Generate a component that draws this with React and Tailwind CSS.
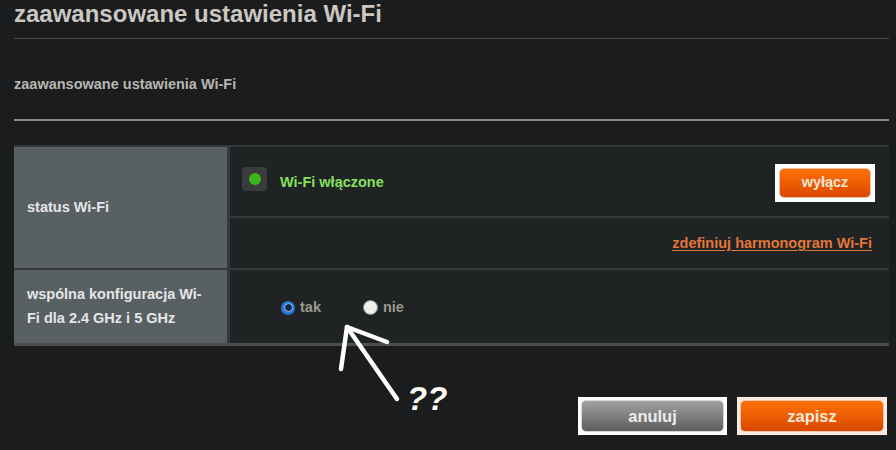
export default function App() {
  const font = { fontFamily: '"Liberation Sans", Arial, sans-serif' }

  return (
    <div className="relative w-[896px] h-[450px] overflow-hidden bg-[#1b1c1e] font-bold" style={font}>
      <div className="pl-[14px] pr-[7px]">
        <h1 className="h-[28px] text-[24px] leading-[28px] text-[#cbc7c1]">zaawansowane ustawienia Wi-Fi</h1>
        <div className="mt-[10px] h-px bg-[#48494b]" />
        <div className="mt-[35px] text-[14.5px] leading-[20px] text-[#b9b6b1]">zaawansowane ustawienia Wi-Fi</div>
        <div className="mt-[25px] h-[2px] bg-[#8a8a8a]" />

        <div className="mt-[24px] border-t-2 border-b-[3px] border-t-[#34383a] border-b-[#4a4e50] bg-[#35393b] flex flex-col gap-[2px]">
          <div className="grid grid-cols-[213px_1fr] gap-[3px] h-[121px]">
            <div className="bg-[#596064] flex items-center pl-[13px] text-[14.5px] text-[#e6e6e6]">status Wi-Fi</div>
            <div className="flex flex-col gap-[2px]">
              <div className="h-[69px] bg-[#202324] flex items-center pl-[12px] pr-[14px] pt-[2px]">
                <div className="w-[25px] h-[24px] mb-[7px] rounded-[4px] bg-[#393b3c] flex items-center justify-center">
                  <span className="w-[12px] h-[12px] rounded-full bg-[#3cb51b]" />
                </div>
                <span className="ml-[13px] text-[14.5px] text-[#86e05c]">Wi-Fi włączone</span>
                <div className="ml-auto bg-white p-[4px]">
                  <button className="w-[92px] h-[30px] rounded-[5px] border border-[#f3c3a3] bg-gradient-to-b from-[#ff7208] to-[#d94800] text-[14.5px] text-[#f7e3d6]">wyłącz</button>
                </div>
              </div>
              <div className="flex-1 bg-[#202324] flex items-center justify-end pr-[17px] pt-[2px]">
                <a href="#" className="text-[14.5px] text-[#e2773a] underline underline-offset-2">zdefiniuj harmonogram Wi-Fi</a>
              </div>
            </div>
          </div>

          <div className="grid grid-cols-[213px_1fr] gap-[3px] h-[73px]">
            <div className="bg-[#596064] flex items-center pl-[13px] text-[14.5px] leading-[23.5px] text-[#e6e6e6]">
              <span>wspólna konfiguracja Wi-<br />Fi dla 2.4 GHz i 5 GHz</span>
            </div>
            <div className="bg-[#202324] flex items-center pl-[51px] pt-[2px] text-[14.5px] text-[#9b9793]">
              <span className="w-[14px] h-[14px] rounded-full bg-[#2a74dc] flex items-center justify-center">
                <span className="w-[9px] h-[9px] rounded-full border-[1.5px] border-[#9cc4ff] bg-[#13264a]" />
              </span>
              <span className="ml-[5px]">tak</span>
              <span className="ml-[42px] w-[15px] h-[15px] rounded-full border border-[#8a8a8a] bg-[#eeeeee]" />
              <span className="ml-[5px]">nie</span>
            </div>
          </div>
        </div>

        <div className="mt-[51px] flex justify-end gap-[10px] pr-[2px]">
          <div className="bg-white p-[3px]">
            <button className="w-[143px] h-[32px] rounded-[5px] border border-[#d6d6d6] bg-gradient-to-b from-[#a2a2a2] to-[#5e5e5e] text-[16.5px] text-[#ececec]">anuluj</button>
          </div>
          <div className="bg-[#fbece4] p-[3px]">
            <button className="w-[144px] h-[32px] rounded-[5px] border border-[#f5c6a8] bg-gradient-to-b from-[#ff7208] to-[#d94800] text-[16.5px] text-[#fbe8dc]">zapisz</button>
          </div>
        </div>
      </div>

      <svg className="absolute left-0 top-0 pointer-events-none" width="896" height="450" viewBox="0 0 896 450">
        <g stroke="#ffffff" strokeWidth="4.5" strokeLinecap="round" fill="none">
          <path d="M397 399 L347 327" />
          <path d="M347 327 L341 369" />
          <path d="M347 327 L387 342" />
        </g>
      </svg>
      <span className="absolute left-[407px] top-[374px] text-[33px] italic text-[#fffaf2]">??</span>
    </div>
  )
}
